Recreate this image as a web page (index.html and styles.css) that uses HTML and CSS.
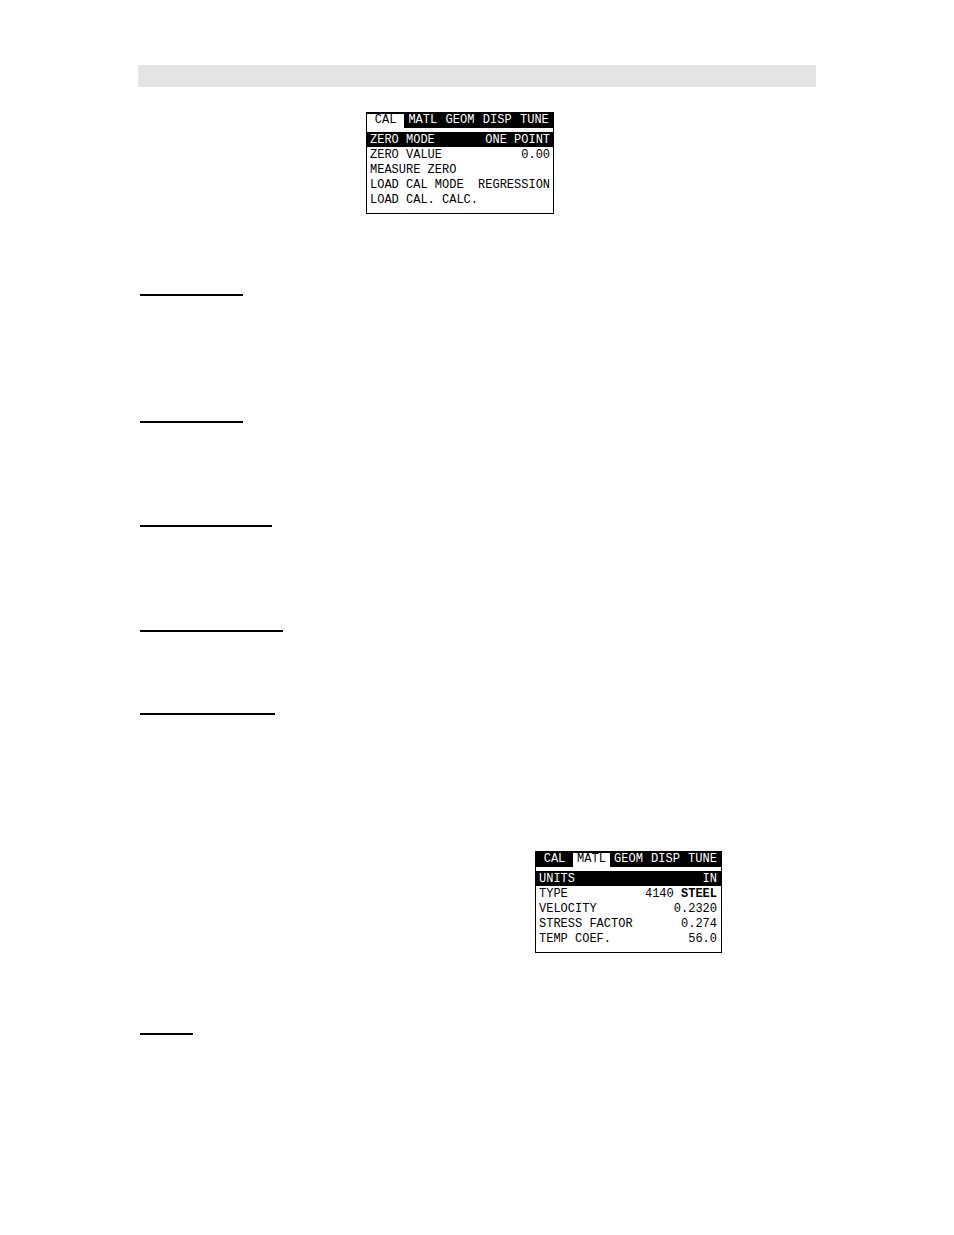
FILE: index.html
```html
<!DOCTYPE html>
<html lang="en">
<head>
	<title>Menu</title>
	<meta charset="utf-8">
	<link rel="stylesheet" href="styles.css">
</head>
<body>
	<main class="page">
		<header class="page__header"></header>

		<div class="lcd lcd_cal">
			<nav class="lcd__tabs">
				<button class="lcd__tab lcd__tab_active" type="button">CAL</button>
				<button class="lcd__tab" type="button">MATL</button>
				<button class="lcd__tab" type="button">GEOM</button>
				<button class="lcd__tab" type="button">DISP</button>
				<button class="lcd__tab" type="button">TUNE</button>
			</nav>
			<table class="lcd__menu">
				<tr class="lcd__row_active"><th scope="row">ZERO MODE</th><td>ONE POINT</td></tr>
				<tr><th scope="row">ZERO VALUE</th><td>0.00</td></tr>
				<tr><th scope="row">MEASURE ZERO</th><td></td></tr>
				<tr><th scope="row">LOAD CAL MODE</th><td>REGRESSION</td></tr>
				<tr><th scope="row">LOAD CAL. CALC.</th><td></td></tr>
			</table>
		</div>

		<section class="item item_mode"><hr class="item__line"></section>
		<section class="item item_value"><hr class="item__line"></section>
		<section class="item item_measure"><hr class="item__line"></section>
		<section class="item item_load"><hr class="item__line"></section>
		<section class="item item_calc"><hr class="item__line"></section>

		<div class="lcd lcd_matl">
			<nav class="lcd__tabs">
				<button class="lcd__tab" type="button">CAL</button>
				<button class="lcd__tab lcd__tab_active" type="button">MATL</button>
				<button class="lcd__tab" type="button">GEOM</button>
				<button class="lcd__tab" type="button">DISP</button>
				<button class="lcd__tab" type="button">TUNE</button>
			</nav>
			<table class="lcd__menu">
				<tr class="lcd__row_active"><th scope="row">UNITS</th><td>IN</td></tr>
				<tr><th scope="row">TYPE</th><td>4140 <b>STEEL</b></td></tr>
				<tr><th scope="row">VELOCITY</th><td>0.2320</td></tr>
				<tr><th scope="row">STRESS FACTOR</th><td>0.274</td></tr>
				<tr><th scope="row">TEMP COEF.</th><td>56.0</td></tr>
			</table>
		</div>

		<section class="item item_units"><hr class="item__line"></section>
	</main>
</body>
</html>
```

FILE: styles.css
```css
* {
	box-sizing: border-box;
}
body {
	margin: 0;
	background: #fff;
	color: #000;
	font-family: "Liberation Mono", monospace;
}
.page {
	padding: 65px 138px 0;
}
.page__header {
	height: 22px;
	margin-bottom: 25px;
	background: #e4e4e4;
}

/* device screen */
.lcd {
	width: 188px;
	margin-bottom: 80px;
	padding-bottom: 6px;
	border: 1px solid #000;
	font-size: 12px;
	line-height: 13px;
}
.lcd_cal {
	margin-left: 228px;
}
.lcd_matl {
	width: 187px;
	margin-left: 397px;
}
.lcd__tabs {
	display: grid;
	grid-template-columns: repeat(5, 1fr);
	margin-bottom: 4px;
	padding-top: 1px;
	background: #000;
}
.lcd__tab {
	height: 14px;
	padding: 0 0 1px;
	border: 0;
	background: #000;
	color: #fff;
	font: inherit;
}
.lcd__tab_active {
	background: #fff;
	color: #000;
}
.lcd__menu {
	width: 100%;
	border-collapse: collapse;
}
.lcd__menu th, .lcd__menu td {
	height: 15px;
	padding: 2px 0 0;
	font-weight: normal;
	white-space: nowrap;
}
.lcd__menu th {
	padding-left: 3px;
	text-align: left;
}
.lcd__menu td {
	padding-right: 4px;
	text-align: right;
}
.lcd__row_active {
	background: #000;
	color: #fff;
}

/* item headings */
.item {
	padding-left: 2px;
}
.item__line {
	height: 2px;
	margin: 0;
	border: 0;
	background: #000;
}
.item_mode {
	min-height: 127px;
}
.item_value {
	min-height: 104px;
}
.item_measure {
	min-height: 105px;
}
.item_load {
	min-height: 83px;
}
.item_calc {
	min-height: 138px;
}
.item_units {
	min-height: 200px;
}
.item_mode .item__line, .item_value .item__line {
	width: 103px;
}
.item_measure .item__line {
	width: 132px;
}
.item_load .item__line {
	width: 143px;
}
.item_calc .item__line {
	width: 135px;
}
.item_units .item__line {
	width: 53px;
}
```
